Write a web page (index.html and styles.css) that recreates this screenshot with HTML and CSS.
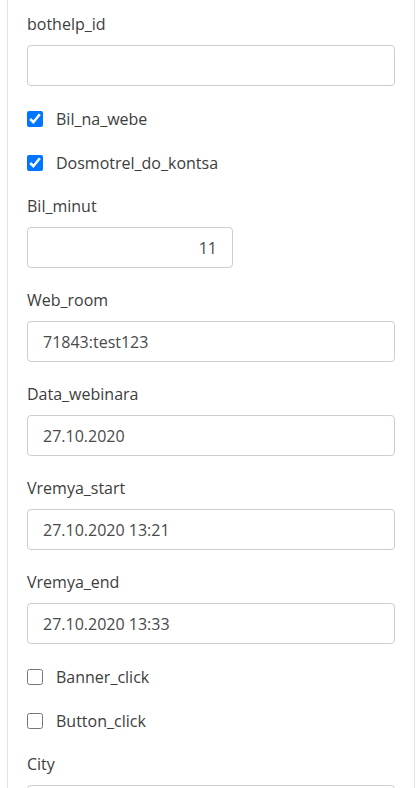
FILE: index.html
```html
<!DOCTYPE html>
<html>
<head>
<meta charset="utf-8">
<link rel="stylesheet" href="styles.css">
</head>
<body>
<div class="panel">
  <form class="form">
    <div class="field">
      <label class="label">bothelp_id</label>
      <input class="input" type="text" value="">
    </div>
    <label class="check"><input type="checkbox" checked><span>Bil_na_webe</span></label>
    <label class="check"><input type="checkbox" checked><span>Dosmotrel_do_kontsa</span></label>
    <div class="field">
      <label class="label">Bil_minut</label>
      <input class="input input-num" type="text" value="11">
    </div>
    <div class="field">
      <label class="label">Web_room</label>
      <input class="input" type="text" value="71843:test123">
    </div>
    <div class="field">
      <label class="label">Data_webinara</label>
      <input class="input" type="text" value="27.10.2020">
    </div>
    <div class="field">
      <label class="label">Vremya_start</label>
      <input class="input" type="text" value="27.10.2020 13:21">
    </div>
    <div class="field">
      <label class="label">Vremya_end</label>
      <input class="input" type="text" value="27.10.2020 13:33">
    </div>
    <label class="check"><input type="checkbox"><span>Banner_click</span></label>
    <label class="check"><input type="checkbox"><span>Button_click</span></label>
    <div class="field">
      <label class="label">City</label>
      <input class="input" type="text" value="">
    </div>
  </form>
</div>
</body>
</html>
```

FILE: styles.css
```css
html, body {
  margin: 0;
  padding: 0;
  background: #fff;
  overflow: hidden;
}
body {
  font-family: "Open Sans", "Noto Sans", sans-serif;
  font-size: 16px;
  color: #333;
}
.panel {
  margin-left: 7px;
  width: 408px;
  box-sizing: border-box;
  border-left: 1px solid #e3e3e3;
  border-right: 1px solid #e3e3e3;
  padding: 14px 19px 0 19px;
  min-height: 800px;
}
.form {
  display: flex;
  flex-direction: column;
  gap: 22px;
}
.field {
  display: flex;
  flex-direction: column;
}
.label {
  line-height: 20px;
  margin-bottom: 11px;
  color: #3d3d3d;
}
.input {
  height: 41px;
  box-sizing: border-box;
  border: 1px solid #cdcdcd;
  border-radius: 4px;
  padding: 0 15px;
  font-family: inherit;
  font-size: 16px;
  color: #4a4a4a;
  background: #fff;
  outline: none;
  width: 100%;
}
.input-num {
  width: 206px;
  text-align: right;
}
.check {
  display: flex;
  align-items: center;
  height: 22px;
  line-height: 22px;
  color: #3d3d3d;
}
.check input {
  width: 16px;
  height: 16px;
  margin: 0 13px 0 0;
  accent-color: #0075ff;
}
```
